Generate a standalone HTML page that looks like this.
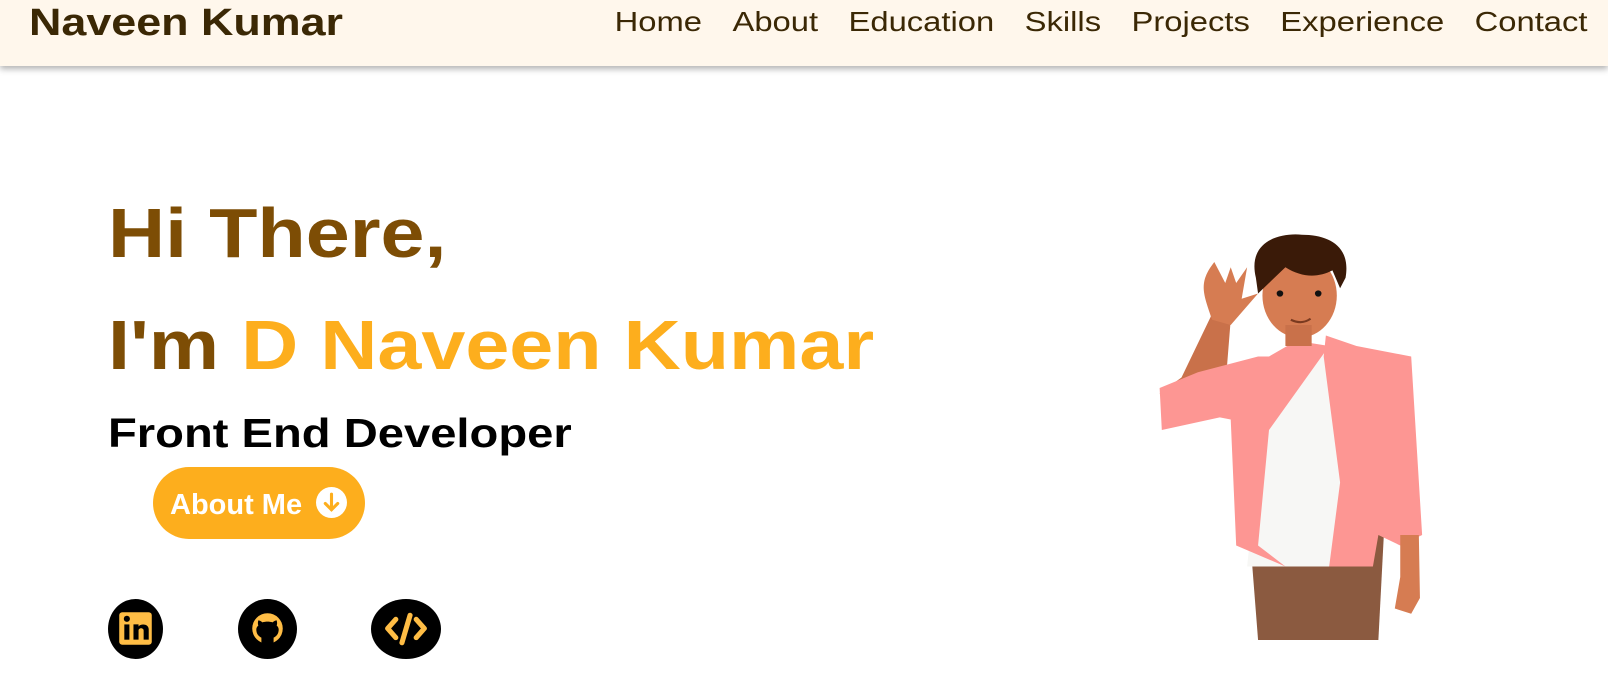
<!DOCTYPE html>
<html><head><meta charset="utf-8"><style>
*{margin:0;padding:0;box-sizing:border-box}
body{width:1608px;height:691px;overflow:hidden;background:#fff;font-family:"Liberation Sans",sans-serif;position:relative}
header{position:absolute;left:0;top:0;width:1608px;height:66px;background:#fff7ec;box-shadow:0 3px 6px rgba(0,0,0,.3);}
.logo{position:absolute;left:29px;top:2px;font-size:38px;font-weight:bold;color:#3b2805;transform:scaleX(1.18);transform-origin:left}
nav{position:absolute;right:20px;top:6px;font-size:28px;color:#3b2805;white-space:nowrap;transform:scaleX(1.17);transform-origin:right}
nav span{margin-left:26px}
h1{position:absolute;left:108px;font-weight:bold;font-size:70px;color:#7d4d05;white-space:nowrap;transform-origin:left;transform:scaleX(1.13)}
h1 b{color:#fdae1d}
h2{position:absolute;left:108px;top:410px;font-size:41px;font-weight:bold;color:#000;transform-origin:left;transform:scaleX(1.15);white-space:nowrap}
.btn{position:absolute;left:153px;top:467px;width:212px;height:72px;border-radius:36px;background:#fdae1d;color:#fff;font-weight:bold;font-size:29px;padding:20px 0 0 17px;white-space:nowrap}
.btn i{display:inline-block;width:31px;height:31px;border-radius:50%;background:#fff;vertical-align:-4px;margin-left:6px;position:relative}
.ic{position:absolute;top:599px;background:#000;border-radius:50%}
</style></head><body>
<header><div class="logo">Naveen Kumar</div>
<nav><span>Home</span><span>About</span><span>Education</span><span>Skills</span><span>Projects</span><span>Experience</span><span>Contact</span></nav></header>
<h1 style="top:193px">Hi There,</h1>
<h1 style="top:305px">I'm <b>D Naveen Kumar</b></h1>
<h2>Front End Developer</h2>
<div class="btn">About Me <i><svg width="31" height="31" viewBox="0 0 30 30" style="position:absolute;left:0;top:0"><path d="M15 7v15M9 16l6 6 6-6" stroke="#fdae1d" stroke-width="3" fill="none" stroke-linecap="round"/></svg></i></div>
<div class="ic" style="left:108px;width:55px;height:60px"><svg width="55" height="60" viewBox="0 0 54 59"><rect x="11" y="13" width="32" height="32" rx="3" fill="#ffbd45"/><rect x="16" y="25" width="5" height="15" fill="#000"/><circle cx="18.5" cy="19.5" r="3" fill="#000"/><path d="M25 25h5v2c2-3 10-3 10 3v10h-5v-9c0-3-5-3-5 0v9h-5z" fill="#000"/></svg></div>
<div class="ic" style="left:238px;width:59px;height:60px"><svg width="59" height="60" viewBox="0 0 58 59"><circle cx="29" cy="29" r="15" fill="#ffbd45"/><path d="M23 46v-8c-2-1-5-3-5-8 0-2 1-3 2-4-1-2 0-5 0-5s2 0 4 2c3-1 7-1 10 0 2-2 4-2 4-2s1 3 0 5c1 1 2 2 2 4 0 5-3 7-5 8v8z" fill="#000"/></svg></div>
<div class="ic" style="left:371px;width:70px;height:60px"><svg width="70" height="60" viewBox="0 0 68 59"><path d="M24 20l-8 9 8 9M44 20l8 9-8 9M38 16l-8 27" stroke="#ffbd45" stroke-width="5" fill="none" stroke-linecap="round" stroke-linejoin="round"/></svg></div>
<svg style="position:absolute;left:1094px;top:220px" width="350" height="420" viewBox="0 0 320 400" preserveAspectRatio="none">
<path d="M110 85 L80 150 L60 165 L75 175 L120 160 L125 95Z" fill="#c9714a"/>
<path d="M108 95 C100 70 95 60 110 40 L120 60 L125 45 L130 60 L140 45 L135 75 L150 70 L125 100Z" fill="#d67c52"/>
<path d="M135 200 L150 400 L260 400 L265 300 L235 200Z" fill="#8b5a40"/>
<path d="M160 130 L140 330 L250 330 L230 125Z" fill="#f7f7f5"/>
<path d="M212 110 L240 120 L290 130 L300 300 L280 310 L260 300 L255 330 L215 330 L225 250 L210 130Z" fill="#fd9693"/>
<path d="M185 115 L160 130 L150 130 L95 145 L60 160 L62 200 L115 188 L125 190 L130 310 L175 330 L150 310 L160 200 L215 120Z" fill="#fd9693"/>
<path d="M280 300 L297 300 L298 360 L290 375 L275 370 L280 340Z" fill="#d67c52"/>
<ellipse cx="188" cy="72" rx="34" ry="40" fill="#d67c52"/>
<rect x="175" y="100" width="24" height="20" fill="#c9714a"/>
<path d="M148 55 C140 20 170 12 190 14 C215 14 235 25 230 55 L225 65 L218 48 C205 55 190 55 175 45 L160 60 L150 70Z" fill="#3a1a08"/>
<circle cx="170" cy="70" r="3" fill="#111"/><circle cx="205" cy="70" r="3" fill="#111"/>
<path d="M180 95 Q190 100 198 94" stroke="#7a3a20" stroke-width="2" fill="none"/>
</svg>
</body></html>
